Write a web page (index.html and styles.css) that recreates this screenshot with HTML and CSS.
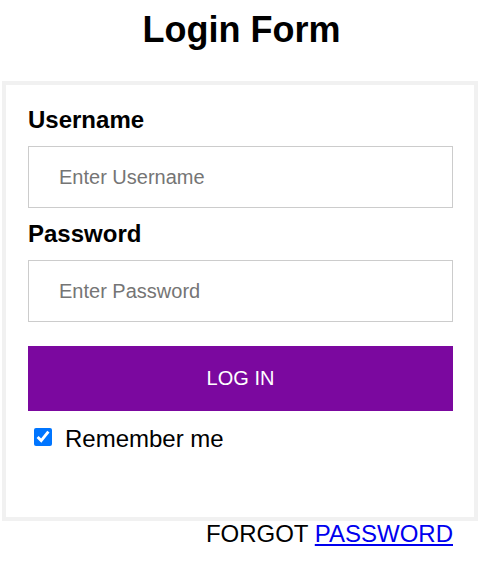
FILE: index.html
```html
<!DOCTYPE html>
<html lang="en">
<head>
<meta charset="utf-8">
<title>Login Form</title>
<link rel="stylesheet" href="styles.css">
</head>
<body>
<h1 class="title">Login Form</h1>
<form class="login-box">
  <label class="field-label" for="uname">Username</label>
  <input class="field-input" id="uname" type="text" placeholder="Enter Username">
  <label class="field-label" for="psw">Password</label>
  <input class="field-input" id="psw" type="password" placeholder="Enter Password">
  <button class="login-btn" type="button">LOG IN</button>
  <label class="remember">
    <input class="remember-check" type="checkbox" checked>
    <span>Remember me</span>
  </label>
</form>
<p class="forgot">FORGOT <a href="#" class="forgot-link">PASSWORD</a></p>
</body>
</html>
```
FILE: styles.css
```css
html, body {
  margin: 0;
  padding: 0;
  background: #ffffff;
}
body {
  font-family: "Liberation Sans", Arial, sans-serif;
  color: #000;
}
.title {
  margin: 10px 0 31px;
  font-size: 36px;
  line-height: 40px;
  font-weight: bold;
  text-align: center;
}
.login-box {
  margin: 0 5px 0 2px;
  border: 4px solid #f1f1f1;
  padding: 22px 21px 65px 22px;
  display: flex;
  flex-direction: column;
}
.field-label {
  display: block;
  font-size: 24px;
  line-height: 26px;
  font-weight: bold;
  margin-bottom: 13px;
}
.field-input {
  box-sizing: border-box;
  height: 62px;
  margin: 0 0 13px;
  padding: 0 30px;
  border: 1px solid #cccccc;
  font-family: "Liberation Sans", Arial, sans-serif;
  font-size: 20px;
  color: #000;
  outline: none;
}
.field-input::placeholder {
  color: #757575;
}
.login-btn {
  margin-top: 11px;
  height: 65px;
  border: none;
  background: #7b089f;
  color: #ffffff;
  font-family: "Liberation Sans", Arial, sans-serif;
  font-size: 20px;
  padding: 0;
}
.remember {
  margin-top: 15px;
  display: flex;
  align-items: center;
  font-size: 24px;
  line-height: 26px;
}
.remember-check {
  width: 18px;
  height: 18px;
  margin: 0 13px 4px 6px;
}
.forgot {
  margin: 0;
  padding-right: 30px;
  text-align: right;
  font-size: 24px;
  line-height: 26px;
}
.forgot-link {
  color: #0000ee;
}
```
